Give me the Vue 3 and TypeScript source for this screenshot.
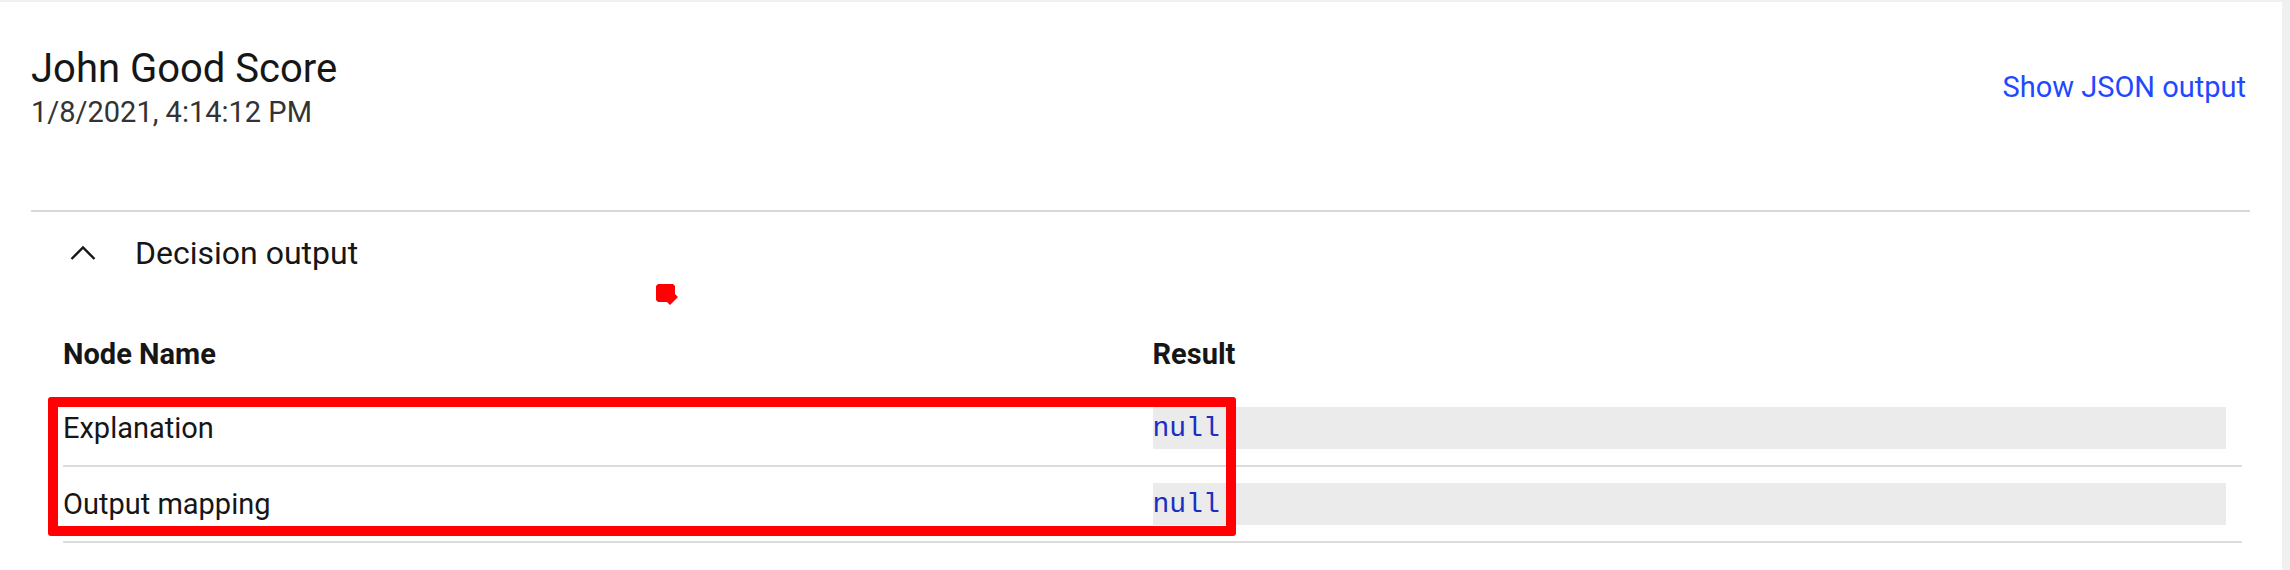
<script setup lang="ts">
import { ref } from 'vue'

interface NodeResult {
  name: string
  result: string | null
}

const title = 'John Good Score'
const timestamp = '1/8/2021, 4:14:12 PM'
const open = ref(true)
const rows: NodeResult[] = [
  { name: 'Explanation', result: null },
  { name: 'Output mapping', result: null },
]
</script>

<template>
  <main class="panel">
    <header class="head">
      <div>
        <h1 class="title">{{ title }}</h1>
        <p class="time">{{ timestamp }}</p>
      </div>
      <a class="link" href="#json">Show JSON output</a>
    </header>

    <section class="section">
      <button class="toggle" type="button" :aria-expanded="open" @click="open = !open">
        <svg class="chevron" :class="{ closed: !open }" viewBox="0 0 32 32" aria-hidden="true">
          <path d="M4.5 22 16 10.5 27.5 22" fill="none" stroke="currentColor" stroke-width="2.4" />
        </svg>
        <span>Decision output</span>
      </button>

      <div v-if="open" class="results">
        <table class="table">
          <thead>
            <tr>
              <th scope="col">Node Name</th>
              <th scope="col">Result</th>
            </tr>
          </thead>
          <tbody>
            <tr v-for="row in rows" :key="row.name">
              <td>{{ row.name }}</td>
              <td class="value"><code>{{ row.result ?? 'null' }}</code></td>
            </tr>
          </tbody>
        </table>
        <div class="highlight" aria-hidden="true"></div>
        <svg class="marker" viewBox="0 0 23 22" aria-hidden="true">
          <path d="M2 0H17L19 2V10L22 13L14 21L11 18H2L0 16V2Z" fill="#ff0004" />
        </svg>
      </div>
    </section>
  </main>
</template>

<style>
body {
  margin: 0;
  background: #f0f0f0;
}
</style>

<style scoped>
.panel {
  box-sizing: border-box;
  min-height: 100vh;
  margin-right: 8px;
  padding: 0 32px 0 31px;
  border-top: 2px solid #f0f0f0;
  background: #fff;
  color: #161616;
  font-family: Roboto, "Noto Sans", sans-serif;
  font-size: 29px;
  line-height: 36px;
}
.head {
  display: flex;
  justify-content: space-between;
  align-items: center;
  padding: 42px 4px 80px 0;
}
.title {
  margin: 0;
  font-size: 40px;
  font-weight: 400;
  line-height: 50px;
}
.time {
  margin: 0;
  color: #333;
}
.link {
  color: #1f49ff;
  text-decoration: none;
}
.section {
  border-top: 2px solid #d9d9d9;
}
.toggle {
  display: flex;
  align-items: center;
  gap: 36px;
  width: 100%;
  height: 82px;
  padding: 0 36px;
  border: 0;
  background: none;
  color: inherit;
  font: inherit;
  font-size: 32px;
  text-align: left;
}
.chevron {
  width: 32px;
  height: 32px;
}
.closed {
  transform: rotate(180deg);
}
.results {
  position: relative;
  margin: 21px 8px 0 32px;
}
.table {
  width: 100%;
  table-layout: fixed;
  border-collapse: separate;
  border-spacing: 0;
}
th {
  height: 74px;
  padding: 2px 0 0;
  font-weight: 700;
  text-align: left;
}
td {
  padding: 16px 16px 16px 0;
  border-bottom: 2px solid #dcdcdc;
}
code {
  display: block;
  padding-top: 2px;
  background: #ebebeb;
  color: #1c2ec4;
  font-family: "Liberation Mono", monospace;
  font-size: 28px;
  line-height: 40px;
}
/* Annotation drawn over the result rows */
.highlight {
  position: absolute;
  top: 82px;
  bottom: 7px;
  left: -15px;
  box-sizing: border-box;
  width: calc(50% + 98px);
  border: 10px solid #ff0004;
  border-radius: 3px;
}
.marker {
  position: absolute;
  top: -31px;
  left: 593px;
  width: 23px;
  height: 22px;
}
</style>
